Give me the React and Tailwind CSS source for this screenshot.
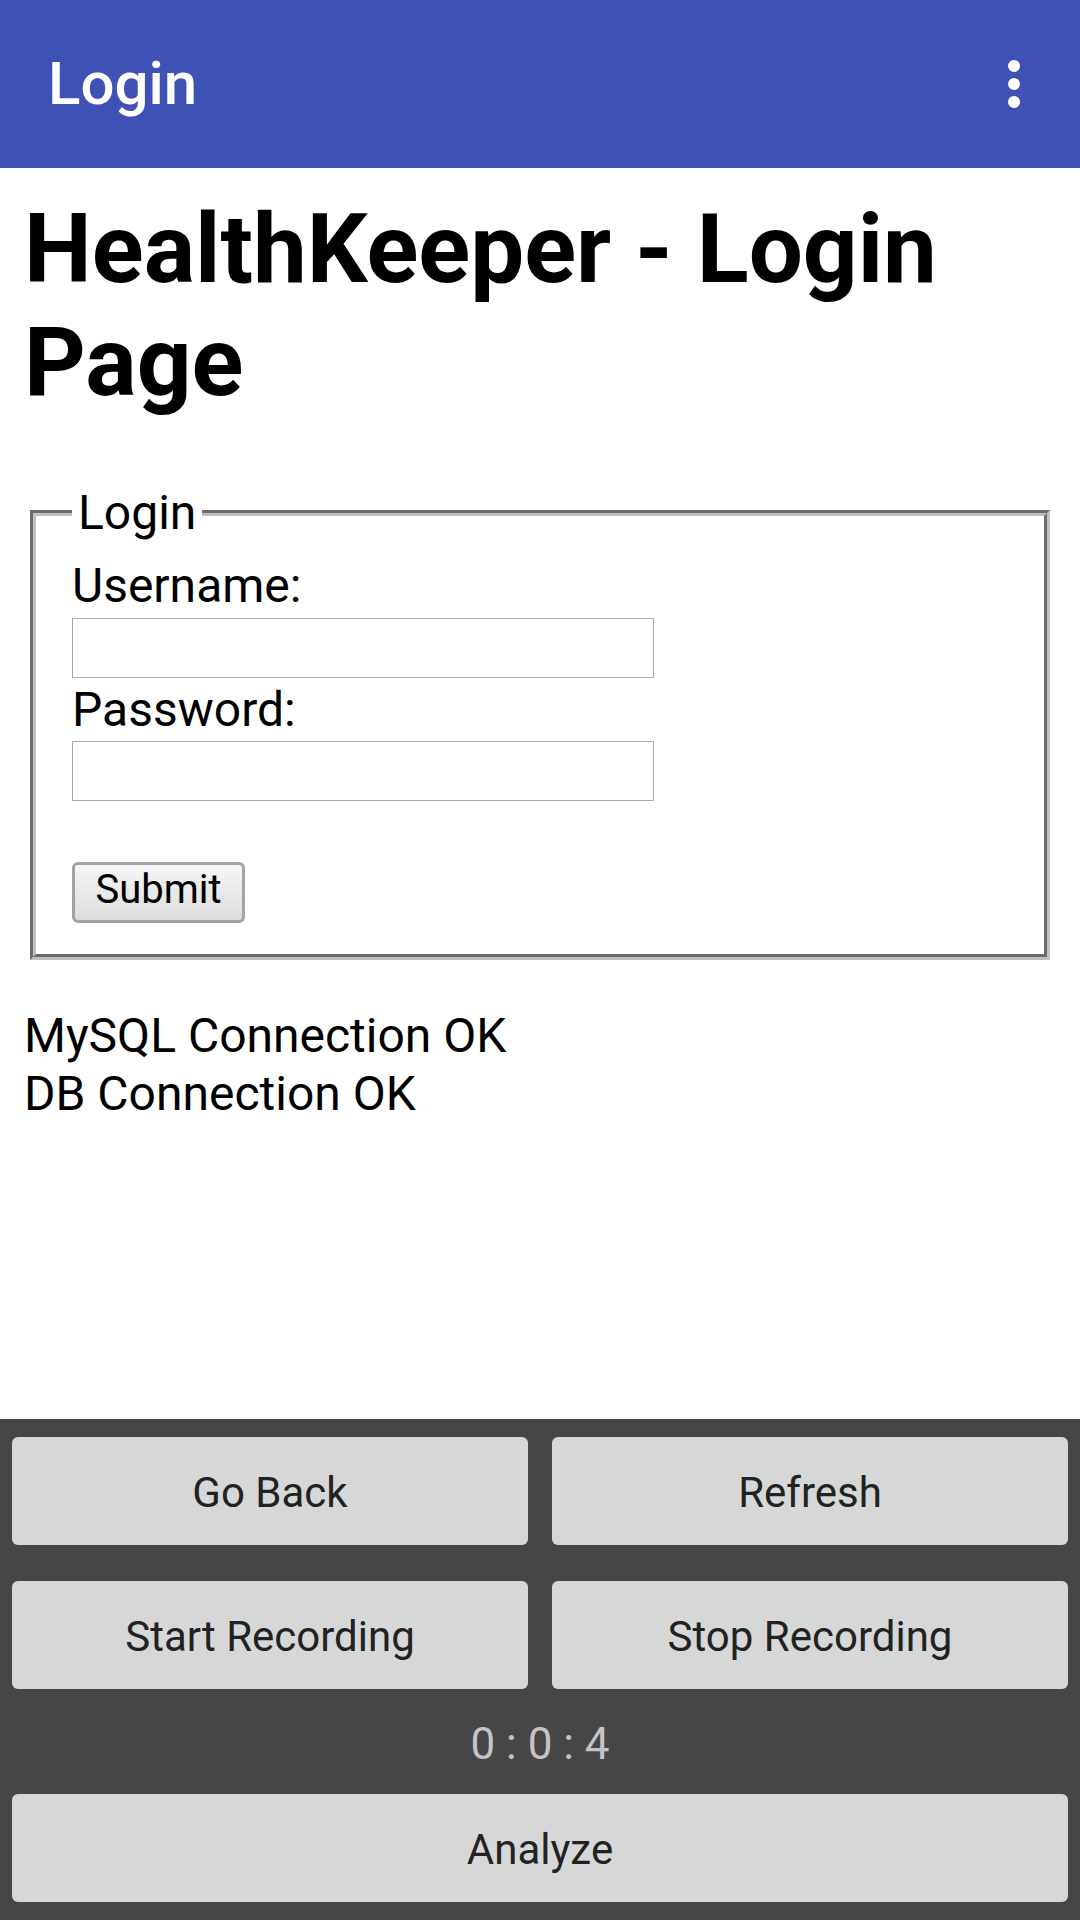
import React from 'react';

const PanelButton = ({ children }) => (
  <div className="px-[12px] py-[18px]">
    <button className="w-full h-[108px] pt-[4px] rounded-[6px] bg-[#d6d7d7] text-[42px] text-[#222222] leading-none">
      {children}
    </button>
  </div>
);

export default function App() {
  return (
    <div className="w-[1080px] h-[1920px] flex flex-col bg-white font-[family-name:Roboto,'Noto_Sans',sans-serif] text-black">
      {/* app bar */}
      <div className="h-[168px] shrink-0 bg-[#3f51b5] flex items-center justify-between pl-[48px] pr-[60px]">
        <div className="text-[60px] font-medium text-white leading-none">Login</div>
        <div className="flex flex-col gap-[6px]">
          <span className="w-[12px] h-[12px] rounded-full bg-white" />
          <span className="w-[12px] h-[12px] rounded-full bg-white" />
          <span className="w-[12px] h-[12px] rounded-full bg-white" />
        </div>
      </div>

      {/* web content */}
      <div className="flex-1 px-[24px] pt-[25px]">
        <h1 className="text-[96px] font-bold leading-[113px] mb-[66px]">HealthKeeper - Login Page</h1>

        <fieldset className="mx-[6px] border-[6px] [border-style:groove] border-[#c0c0c0] pt-[17px] px-[36px] pb-[31px]">
          <legend className="px-[6px] text-[48px] leading-[56px]">Login</legend>
          <div className="text-[48px] leading-[56px]">Username:</div>
          <input type="text" className="block mt-[4px] w-[582px] h-[60px] border border-[#a9a9a9] outline-none" />
          <div className="mt-[4px] text-[48px] leading-[56px]">Password:</div>
          <input type="password" className="block mt-[3px] w-[582px] h-[60px] border border-[#a9a9a9] outline-none" />
          <button className="block mt-[61px] w-[173px] h-[61px] pb-[6px] rounded-[6px] border-[3px] border-[#a3a3a3] bg-linear-to-b from-[#f6f6f6] to-[#dcdcdc] text-[40px] leading-none text-black">
            Submit
          </button>
        </fieldset>

        <div className="mt-[47px] text-[48px] leading-[58px]">
          <div>MySQL Connection OK</div>
          <div>DB Connection OK</div>
        </div>
      </div>

      {/* native bottom panel */}
      <div className="h-[501px] shrink-0 bg-[#464646] flex flex-col">
        <div className="grid grid-cols-2">
          <PanelButton>Go Back</PanelButton>
          <PanelButton>Refresh</PanelButton>
          <PanelButton>Start Recording</PanelButton>
          <PanelButton>Stop Recording</PanelButton>
        </div>
        <div className="h-[69px] pt-[5px] flex items-center justify-center text-[44px] text-[#c4c4c4] leading-none">
          0 : 0 : 4
        </div>
        <PanelButton>Analyze</PanelButton>
      </div>
    </div>
  );
}
